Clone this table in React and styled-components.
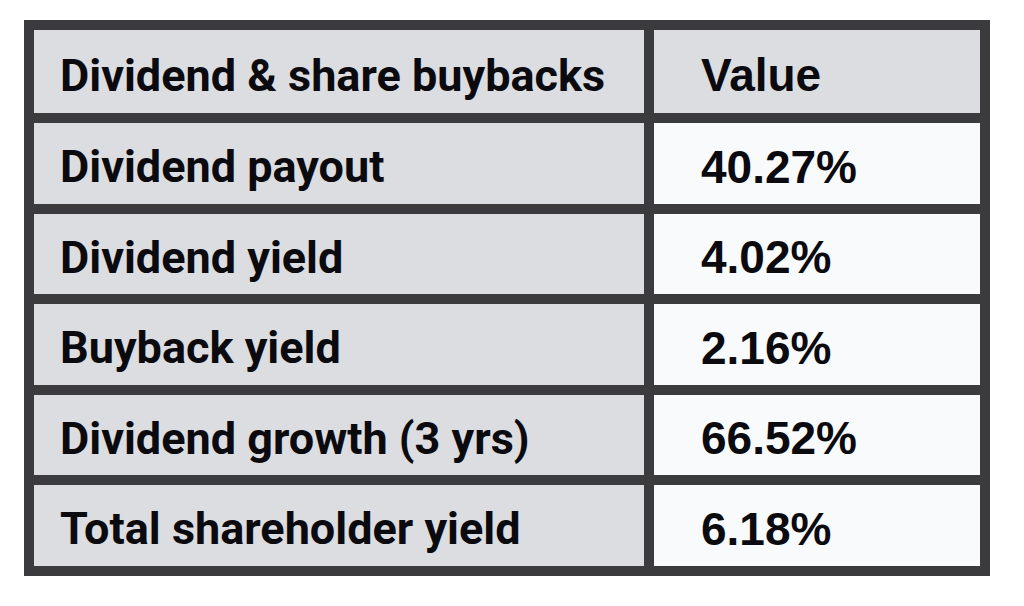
import React from "react";
import styled, { createGlobalStyle } from "styled-components";

const Global = createGlobalStyle`
  html, body { margin: 0; padding: 0; background: #ffffff; }
  body { width: 1024px; height: 606px; overflow: hidden; }
`;

const Page = styled.div`
  padding: 20px 0 0 24px;
`;

const Table = styled.div`
  display: grid;
  grid-template-columns: 610px 326px;
  grid-template-rows: 83px repeat(5, 80.5px);
  gap: 10px;
  padding: 10px;
  width: 946px;
  background: #3b3b3d;
`;

const Cell = styled.div`
  display: flex;
  align-items: center;
  padding-top: 7px;
  box-sizing: border-box;
  color: #0b0b0f;
  font-weight: 700;
  font-size: 45px;
  white-space: nowrap;
`;

const Label = styled(Cell)`
  background: #dcdde1;
  padding-left: 26px;
  font-family: Roboto, "Liberation Sans", sans-serif;
`;

const Value = styled(Cell)`
  background: ${(p) => (p.$head ? "#dcdde1" : "#f9fafc")};
  padding-left: 47px;
  font-family: "Liberation Sans", Arial, sans-serif;
  font-size: 46px;
`;

const rows = [
  ["Dividend payout", "40.27%"],
  ["Dividend yield", "4.02%"],
  ["Buyback yield", "2.16%"],
  ["Dividend growth (3 yrs)", "66.52%"],
  ["Total shareholder yield", "6.18%"],
];

export default function App() {
  return (
    <>
      <Global />
      <Page>
        <Table>
          <Label>Dividend &amp; share buybacks</Label>
          <Value $head>Value</Value>
          {rows.map(([l, v]) => (
            <React.Fragment key={l}>
              <Label>{l}</Label>
              <Value>{v}</Value>
            </React.Fragment>
          ))}
        </Table>
      </Page>
    </>
  );
}
